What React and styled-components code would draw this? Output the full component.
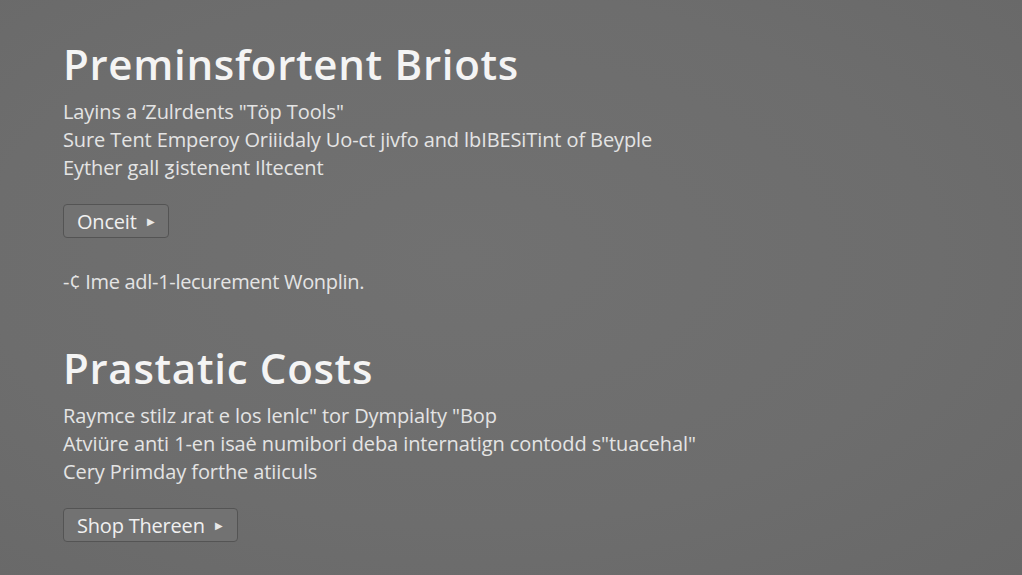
import React from "react";
import styled, { createGlobalStyle } from "styled-components";

const Global = createGlobalStyle`
  html, body { margin: 0; padding: 0; }
  body {
    width: 1022px;
    height: 575px;
    overflow: hidden;
    background: #6d6d6d;
    font-family: "Open Sans", "Liberation Sans", sans-serif;
  }
`;

const Page = styled.main`
  box-sizing: border-box;
  width: 1022px;
  height: 575px;
  padding: 36px 0 0 63px;
  background: radial-gradient(ellipse at 45% 45%, #717171 0%, #6d6d6d 60%, #686868 100%);
  display: flex;
  flex-direction: column;
`;

const Section = styled.section`
  display: flex;
  flex-direction: column;
  align-items: flex-start;
  margin-top: ${(p) => p.$top || 0}px;
`;

const Heading = styled.h1`
  margin: 0;
  font-size: 42px;
  line-height: 56px;
  font-weight: 600;
  color: #f4f4f4;
  letter-spacing: 0.7px;
`;

const Body = styled.p`
  margin: 6px 0 0;
  font-size: 20px;
  line-height: 28px;
  color: #e4e4e4;
  letter-spacing: -0.1px;
`;

const Note = styled.p`
  margin: 30px 0 0;
  font-size: 20px;
  line-height: 28px;
  color: #e4e4e4;
  letter-spacing: -0.3px;
`;

const Button = styled.button`
  margin-top: ${(p) => p.$top}px;
  display: inline-flex;
  align-items: center;
  gap: 10px;
  height: 34px;
  padding: 0 14px 0 13px;
  background: #727272;
  border: 1.5px solid #545454;
  border-radius: 4px;
  color: #f0f0f0;
  font-family: "Open Sans", sans-serif;
  font-size: 20px;
  letter-spacing: -0.2px;
  cursor: pointer;
`;

const Arrow = styled.span`
  font-size: 10px;
  color: #e8e8e8;
`;

export default function App() {
  return (
    <>
      <Global />
      <Page>
        <Section>
          <Heading>Preminsfortent Briots</Heading>
          <Body>
            Layins a ‘Zulrdents "Töp Tools"
            <br />
            Sure Tent Emperoy Oriiidaly Uo-ct jivfo and lbIBESiTint of Beyple
            <br />
            Eyther gall ƺistenent Iltecent
          </Body>
          <Button $top={22}>
            Onceit <Arrow>▶</Arrow>
          </Button>
          <Note>-¢ Ime adl-1-lecurement Wonplin.</Note>
        </Section>
        <Section $top={44}>
          <Heading>Prastatic Costs</Heading>
          <Body>
            Raymce stilz ɹrat e los lenlc" tor Dympialty "Bop
            <br />
            Atviüre anti 1-en isaė numibori deba internatign contodd s"tuacehal"
            <br />
            Cery Primday forthe atiiculs
          </Body>
          <Button $top={22}>
            Shop Thereen <Arrow>▶</Arrow>
          </Button>
        </Section>
      </Page>
    </>
  );
}
